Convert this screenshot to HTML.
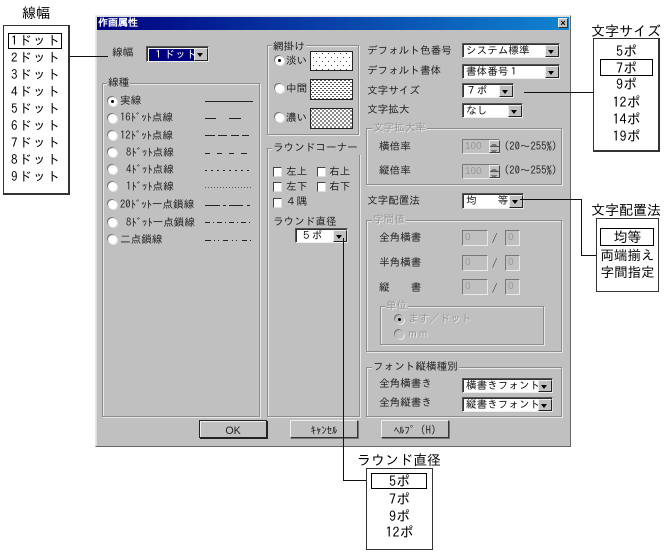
<!DOCTYPE html>
<html><head><meta charset="utf-8">
<style>
html,body{margin:0;padding:0;background:#fff;width:664px;height:552px;overflow:hidden}
body{position:relative;font-family:"Liberation Sans","IPAGothic","Noto Sans CJK JP",sans-serif;filter:blur(.3px)}
div,span{position:absolute;box-sizing:border-box}
.t{white-space:nowrap;font-size:10.6px;line-height:14px;color:#222;font-family:"IPAGothic","Noto Sans CJK JP",sans-serif}
.g{color:#979797;text-shadow:1px 1px 0 #e8e8e8}
.L{font-size:14px;line-height:16px;color:#000;text-align:center}
.D{font-size:13px;letter-spacing:1.2px;left:11px;text-align:left}
.box{background:#fff;border:2px solid #333;border-top-width:1px;border-left-width:1px}
.hl{border:1px solid #000;background:#fff}
.grp{border:1px solid #8c8c8c;box-shadow:1px 1px 0 #e8e8e8,inset 1px 1px 0 #e8e8e8}
.lab{background:#c0c0c0;padding:0 1px}
.cb{background:#fff;border:1px solid #555;border-right-color:#ddd;border-bottom-color:#eee;box-shadow:inset 1px 1px 0 #333}
.cb i{position:absolute;right:0;top:1px;bottom:0;width:12px;background:#c0c0c0;border:1px solid;border-color:#eee #222 #222 #eee}
.cb i:after{content:"";position:absolute;left:2px;top:4px;border:3px solid transparent;border-top:4px solid #000;border-bottom:0}
.cb b{position:absolute;left:3px;top:0;line-height:14px;font-weight:normal;font-size:10.6px;white-space:nowrap;font-family:"IPAGothic","Noto Sans CJK JP",sans-serif;color:#111}
.r{width:9px;height:9px;border-radius:50%;background:#fff;box-shadow:-1px -1px 0 #777,1px 1px 0 #e4e4e4}
.r.on:after{content:"";position:absolute;left:3px;top:3px;width:3px;height:3px;border-radius:50%;background:#000}
.c{width:9px;height:10px;background:#fff;border:1px solid #444;border-right-color:#ddd;border-bottom-color:#ddd}
.in{background:#c0c0c0;border:1px solid #777;border-right-color:#e8e8e8;border-bottom-color:#e8e8e8;font-size:10px;line-height:13px;color:#999;padding-left:2px;font-family:"Liberation Sans",sans-serif}
.sp{width:11px;height:13px;background:#c0c0c0;border:1px solid;border-color:#eee #444 #444 #eee}
.sp:after{content:"";position:absolute;left:0;right:0;top:5px;height:1px;background:#555}
.btn{background:#c0c0c0;border:1px solid;border-color:#eee #333 #333 #eee;box-shadow:1px 1px 0 #777;text-align:center}
.btn .t{position:static;line-height:15px}
</style></head><body>

<!-- left legend -->
<div class="t L" style="left:22px;top:5px">線幅</div>
<div class="box" style="left:3px;top:25px;width:67px;height:170px"></div>
<div class="hl" style="left:8px;top:33px;width:54px;height:16px"></div>
<div class="t L D" style="top:33px">1ドット</div>
<div class="t L D" style="top:50px">2ドット</div>
<div class="t L D" style="top:67px">3ドット</div>
<div class="t L D" style="top:84px">4ドット</div>
<div class="t L D" style="top:101px">5ドット</div>
<div class="t L D" style="top:118px">6ドット</div>
<div class="t L D" style="top:135px">7ドット</div>
<div class="t L D" style="top:152px">8ドット</div>
<div class="t L D" style="top:169px">9ドット</div>

<!-- dialog -->
<div style="left:95px;top:15px;width:476px;height:432px;background:#c0c0c0;border:1px solid;border-color:#e8e8e8 #666 #666 #e8e8e8;box-shadow:inset 1px 1px 0 #ddd"></div>
<div style="left:97px;top:17px;width:472px;height:13px;background:linear-gradient(90deg,#000080,#1084d0)"></div>
<div class="t" style="left:98px;top:17px;color:#fff;font-size:10px;line-height:13px;font-weight:bold">作画属性</div>
<div style="left:558px;top:18px;width:10px;height:10px;background:#c0c0c0;border:1px solid;border-color:#eee #333 #333 #eee;font:bold 9px/8px 'Liberation Sans',sans-serif;text-align:center;color:#000">×</div>

<div class="t" style="left:112px;top:46px">線幅</div>
<div class="cb" style="left:146px;top:46px;width:63px;height:16px"><span style="left:2px;top:2px;width:47px;height:12px;background:#000080"></span><b style="left:6px;top:1px;color:#fff;letter-spacing:.5px">１ドット</b><i></i></div>

<!-- 線種 -->
<div class="grp" style="left:102px;top:83px;width:158px;height:334px"></div>
<div class="t lab" style="left:107px;top:76px">線種</div>
<div class="r on" style="left:108px;top:97px"></div><div class="t" style="left:120px;top:94px">実線</div>
<div class="r" style="left:108px;top:114px"></div><div class="t" style="left:120px;top:111px">16ﾄﾞｯﾄ点線</div>
<div class="r" style="left:108px;top:131px"></div><div class="t" style="left:120px;top:129px">12ﾄﾞｯﾄ点線</div>
<div class="r" style="left:108px;top:148px"></div><div class="t" style="left:126px;top:146px">8ﾄﾞｯﾄ点線</div>
<div class="r" style="left:108px;top:165px"></div><div class="t" style="left:126px;top:163px">4ﾄﾞｯﾄ点線</div>
<div class="r" style="left:108px;top:182px"></div><div class="t" style="left:126px;top:180px">1ﾄﾞｯﾄ点線</div>
<div class="r" style="left:108px;top:200px"></div><div class="t" style="left:120px;top:198px">20ﾄﾞｯﾄ一点鎖線</div>
<div class="r" style="left:108px;top:218px"></div><div class="t" style="left:126px;top:216px">8ﾄﾞｯﾄ一点鎖線</div>
<div class="r" style="left:108px;top:235px"></div><div class="t" style="left:120px;top:233px">二点鎖線</div>

<!-- 網掛け -->
<div class="grp" style="left:267px;top:45px;width:92px;height:90px"></div>
<div class="t lab" style="left:272px;top:40px">網掛け</div>
<div class="r on" style="left:275px;top:56px"></div><div class="t" style="left:286px;top:54px">淡い</div>
<div class="r" style="left:275px;top:84px"></div><div class="t" style="left:286px;top:82px">中間</div>
<div class="r" style="left:275px;top:113px"></div><div class="t" style="left:286px;top:111px">濃い</div>

<!-- ラウンドコーナー -->
<div class="grp" style="left:267px;top:148px;width:93px;height:269px"></div>
<div class="t lab" style="left:272px;top:141px;padding-right:4px">ラウンドコーナー</div>
<div class="c" style="left:273px;top:167px"></div><div class="t" style="left:286px;top:165px">左上</div>
<div class="c" style="left:317px;top:167px"></div><div class="t" style="left:329px;top:165px">右上</div>
<div class="c" style="left:273px;top:182px"></div><div class="t" style="left:286px;top:180px">左下</div>
<div class="c" style="left:317px;top:182px"></div><div class="t" style="left:329px;top:180px">右下</div>
<div class="c" style="left:273px;top:198px"></div><div class="t" style="left:286px;top:195px">４隅</div>
<div class="t" style="left:273px;top:215px">ラウンド直径</div>
<div class="cb" style="left:295px;top:228px;width:53px;height:15px"><b style="left:5px">５ポ</b><i></i></div>

<!-- right -->
<div class="t" style="left:367px;top:44px">デフォルト色番号</div>
<div class="cb" style="left:462px;top:43px;width:98px;height:15px"><b>システム標準</b><i></i></div>
<div class="t" style="left:367px;top:64px">デフォルト書体</div>
<div class="cb" style="left:462px;top:64px;width:98px;height:15px"><b>書体番号１</b><i></i></div>
<div class="t" style="left:367px;top:84px">文字サイズ</div>
<div class="cb" style="left:462px;top:83px;width:52px;height:15px"><b>７ポ</b><i></i></div>
<div class="t" style="left:367px;top:103px">文字拡大</div>
<div class="cb" style="left:462px;top:103px;width:61px;height:15px"><b>なし</b><i></i></div>

<div class="grp" style="left:366px;top:128px;width:196px;height:57px"></div>
<div class="t lab g" style="left:372px;top:121px">文字拡大率</div>
<div class="t" style="left:379px;top:140px">横倍率</div>
<div class="in" style="left:462px;top:139px;width:38px;height:15px">100</div>
<div class="sp" style="left:489px;top:140px"></div>
<div class="t" style="left:504px;top:140px">(20～255%)</div>
<div class="t" style="left:379px;top:164px">縦倍率</div>
<div class="in" style="left:462px;top:164px;width:38px;height:15px">100</div>
<div class="sp" style="left:489px;top:165px"></div>
<div class="t" style="left:504px;top:164px">(20～255%)</div>

<div class="t" style="left:367px;top:194px">文字配置法</div>
<div class="cb" style="left:462px;top:193px;width:62px;height:16px"><b>均　　等</b><i></i></div>

<div class="grp" style="left:366px;top:220px;width:196px;height:132px"></div>
<div class="t lab g" style="left:372px;top:213px">字間値</div>
<div class="t" style="left:379px;top:231px">全角横書</div>
<div class="in" style="left:462px;top:230px;width:26px;height:16px">0</div><div class="t" style="left:492px;top:232px">/</div><div class="in" style="left:505px;top:230px;width:15px;height:16px">0</div>
<div class="t" style="left:379px;top:256px">半角横書</div>
<div class="in" style="left:462px;top:255px;width:26px;height:16px">0</div><div class="t" style="left:492px;top:257px">/</div><div class="in" style="left:505px;top:255px;width:15px;height:16px">0</div>
<div class="t" style="left:379px;top:281px">縦　　書</div>
<div class="in" style="left:462px;top:279px;width:26px;height:16px">0</div><div class="t" style="left:492px;top:282px">/</div><div class="in" style="left:505px;top:279px;width:15px;height:16px">0</div>

<div class="grp" style="left:380px;top:306px;width:164px;height:39px"></div>
<div class="t lab g" style="left:385px;top:299px">単位</div>
<div class="r on" style="left:395px;top:315px;background:#c0c0c0"></div><div class="t g" style="left:408px;top:312px">ます／ドット</div>
<div class="r" style="left:395px;top:330px;background:#c0c0c0"></div><div class="t g" style="left:407px;top:327px">ｍｍ</div>

<div class="grp" style="left:366px;top:367px;width:196px;height:50px"></div>
<div class="t lab" style="left:372px;top:360px">フォント縦横種別</div>
<div class="t" style="left:379px;top:377px">全角横書き</div>
<div class="cb" style="left:462px;top:378px;width:91px;height:15px"><b>横書きフォント</b><i></i></div>
<div class="t" style="left:379px;top:396px">全角縦書き</div>
<div class="cb" style="left:462px;top:397px;width:91px;height:15px"><b>縦書きフォント</b><i></i></div>

<div class="btn" style="left:199px;top:420px;width:68px;height:18px;border:1px solid #222;box-shadow:1px 1px 0 #222,inset 1px 1px 0 #eee"><span class="t" style="font-family:'Liberation Sans',sans-serif">OK</span></div>
<div class="btn" style="left:290px;top:420px;width:68px;height:18px"><span class="t">ｷｬﾝｾﾙ</span></div>
<div class="btn" style="left:381px;top:420px;width:68px;height:18px"><span class="t">ﾍﾙﾌﾟ (H)</span></div>

<svg style="position:absolute;left:0;top:0" width="664" height="552" shape-rendering="crispEdges">
<defs>
<pattern id="p1" width="6" height="8" patternUnits="userSpaceOnUse"><rect x="1" y="1" width="1" height="1" fill="#444"/><rect x="4" y="5" width="1" height="1" fill="#444"/></pattern>
<pattern id="p2" width="4" height="4" patternUnits="userSpaceOnUse"><rect x="0" y="0" width="2" height="1" fill="#555"/><rect x="2" y="2" width="2" height="1" fill="#555"/></pattern>
<pattern id="p3" width="4" height="4" patternUnits="userSpaceOnUse"><rect x="0" y="0" width="2" height="2" fill="#8a8a8a"/><rect x="2" y="2" width="2" height="2" fill="#8a8a8a"/></pattern>
</defs>
<g stroke="#222" fill="#fff">
<rect x="310.500" y="51.500" width="42" height="19"/>
<rect x="310.500" y="79.500" width="42" height="20"/>
<rect x="310.500" y="108.500" width="42" height="20"/>
</g>
<rect x="311" y="52" width="41" height="18" fill="url(#p1)"/>
<rect x="311" y="80" width="41" height="19" fill="url(#p2)"/>
<rect x="311" y="109" width="41" height="19" fill="url(#p3)"/>
<g stroke="#222" fill="none">
<path d="M205 101.500H253"/>
<path d="M205 118.500H216M229 118.500H241"/>
<path d="M205 135.500H215M218 135.500H227M231 135.500H239M242 135.500H249"/>
<path d="M205 153.500H210M217 153.500H222M229 153.500H234M241 153.500H247"/>
<path d="M205 170.500H250" stroke-dasharray="2 4"/>
<path d="M205 187.500H253" stroke-dasharray="1 2" stroke="#555"/>
<path d="M205 205.500H220M223 205.500H226M229 205.500H243M247 205.500H250"/>
<path d="M205 222.500H210M213 222.500H214M217 222.500H222M225 222.500H226M229 222.500H234M237 222.500H238M241 222.500H246M249 222.500H250"/>
<path d="M205 240.500H211M214 240.500H215M218 240.500H219M223 240.500H228M232 240.500H233M236 240.500H237M242 240.500H247M250 240.500H251"/>
<path d="M491 145.500h6M492 144.500h4M491 150.500h6M492 151.500h4" stroke="#777"/>
<path d="M491 170.500h6M492 169.500h4M491 175.500h6M492 176.500h4" stroke="#777"/>
</g>
<g stroke="#111" fill="none">
<path d="M70 56.500H108"/>
<path d="M524 92.500H594"/>
<path d="M520 199.500H581.500V255.500H597"/>
<path d="M343.500 238V480.500H367"/>
</g>
</svg>

<!-- 文字サイズ legend -->
<div class="t L" style="left:590px;top:23px;width:72px">文字サイズ</div>
<div class="box" style="left:593px;top:38px;width:67px;height:114px"></div>
<div class="hl" style="left:600px;top:59px;width:53px;height:17px"></div>
<div class="t L" style="left:594px;top:43px;width:65px">5ポ</div>
<div class="t L" style="left:594px;top:60px;width:65px">7ポ</div>
<div class="t L" style="left:594px;top:76px;width:65px">9ポ</div>
<div class="t L" style="left:594px;top:94px;width:65px">12ポ</div>
<div class="t L" style="left:594px;top:111px;width:65px">14ポ</div>
<div class="t L" style="left:594px;top:128px;width:65px">19ポ</div>

<!-- 文字配置法 legend -->
<div class="t L" style="left:588px;top:202px;width:76px">文字配置法</div>
<div class="box" style="left:596px;top:218px;width:63px;height:74px;border-width:1px"></div>
<div class="hl" style="left:600px;top:228px;width:54px;height:18px"></div>
<div class="t L" style="left:597px;top:229px;width:61px">均等</div>
<div class="t L" style="left:597px;top:247px;width:61px;font-size:13.500px">両端揃え</div>
<div class="t L" style="left:597px;top:264px;width:61px;font-size:13.500px">字間指定</div>

<!-- ラウンド直径 legend -->
<div class="t L" style="left:354px;top:452px;width:90px">ラウンド直径</div>
<div class="box" style="left:366px;top:468px;width:67px;height:82px;border-width:1px"></div>
<div class="hl" style="left:371px;top:473px;width:56px;height:16px"></div>
<div class="t L" style="left:367px;top:473px;width:65px">5ポ</div>
<div class="t L" style="left:367px;top:491px;width:65px">7ポ</div>
<div class="t L" style="left:367px;top:508px;width:65px">9ポ</div>
<div class="t L" style="left:367px;top:524px;width:65px">12ポ</div>
</body></html>
